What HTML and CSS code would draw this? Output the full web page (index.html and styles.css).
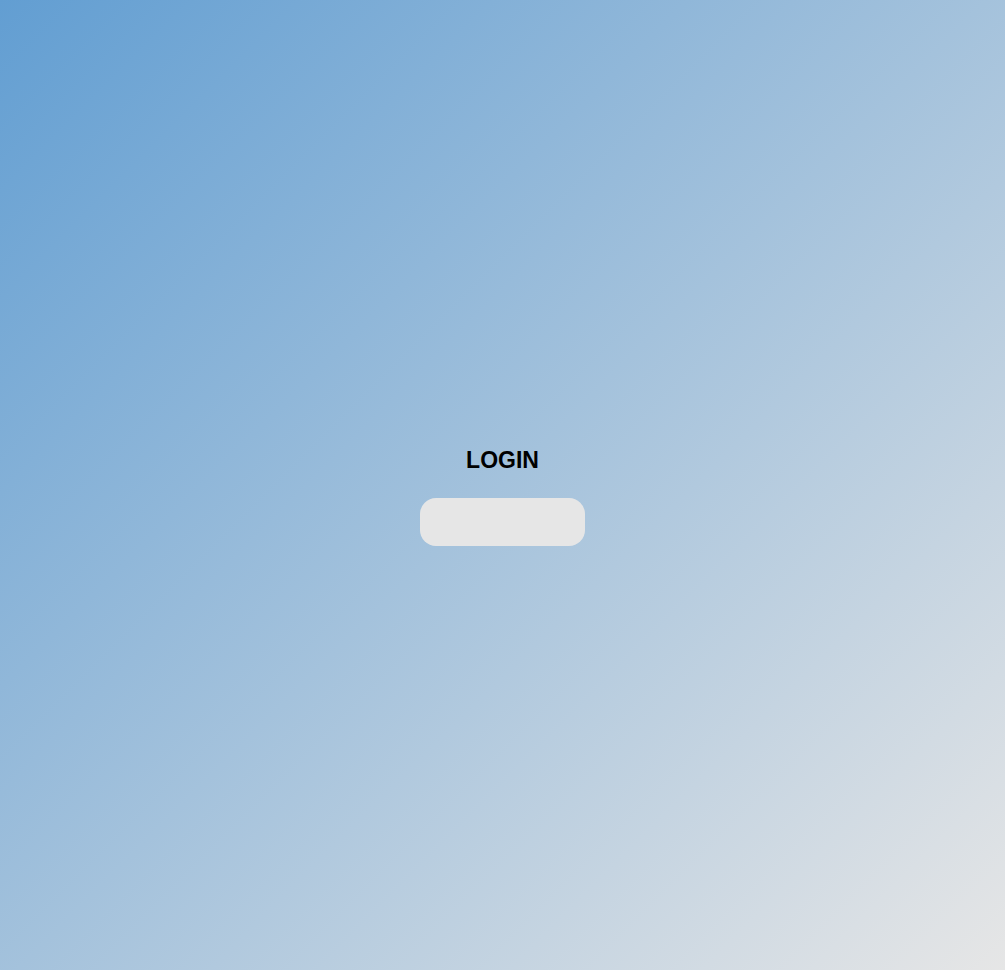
FILE: index.html
```html
<!DOCTYPE html>
<html>
<head>
<meta charset="utf-8">
<link rel="stylesheet" href="styles.css">
</head>
<body>
<div class="page">
  <div class="login">
    <h2 class="title">LOGIN</h2>
    <button class="btn" type="button"></button>
  </div>
</div>
</body>
</html>
```
FILE: styles.css
```css
html, body {
  margin: 0;
  padding: 0;
  height: 100%;
}
body {
  font-family: "Liberation Sans", Arial, sans-serif;
}
.page {
  min-height: 100vh;
  box-sizing: border-box;
  background: linear-gradient(135deg, #629ed2 0%, #e6e6e6 100%);
  display: flex;
  align-items: center;
  justify-content: center;
  padding-top: 23px;
}
.login {
  display: flex;
  flex-direction: column;
  align-items: center;
  gap: 24px;
}
.title {
  margin: 0;
  font-size: 23px;
  font-weight: bold;
  color: #000;
}
.btn {
  width: 165px;
  height: 48px;
  border: none;
  border-radius: 16px;
  background: #e6e6e6;
  padding: 0;
}
```
